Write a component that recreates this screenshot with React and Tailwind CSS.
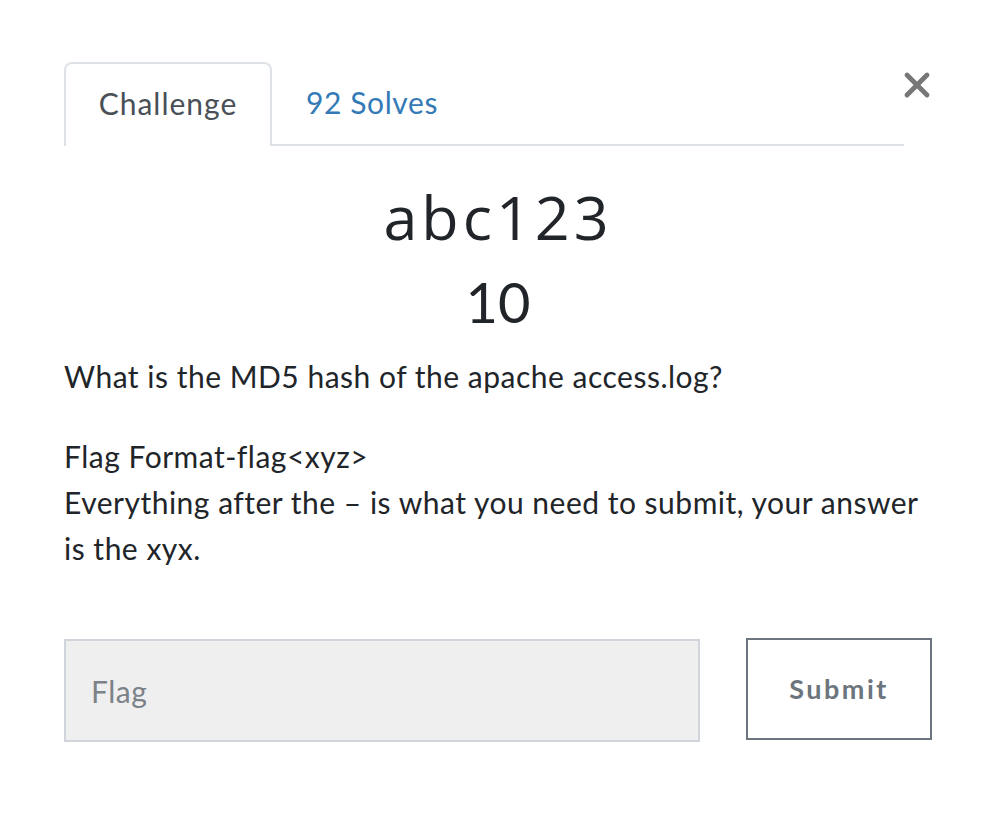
import { X } from 'lucide-react';

export default function App() {
  return (
    <div className="min-h-screen bg-white" style={{ fontFamily: 'Lato, "Noto Sans", sans-serif' }}>
      <div className="pl-[64px] pr-[51px] pt-[62px]">
        <div className="flex items-start">
          <div className="flex flex-1 border-b-2 border-[#dee2e6]">
            <div className="-mb-[2px] w-[208px] h-[84px] pb-[3px] flex items-center justify-center border-2 border-b-0 border-[#dee2e6] rounded-t-[8px] bg-white text-[30px] tracking-[1px] text-[#495057]">
              Challenge
            </div>
            <div className="h-[82px] pl-[34px] pb-[1px] flex items-center text-[30px] tracking-[0.6px] text-[#337ab7]">
              92 Solves
            </div>
          </div>
          <button className="mt-[3px] -ml-[7px] -mr-[6px] text-[#777777]">
            <X size={40} strokeWidth={2.9} />
          </button>
        </div>

        <div className="w-[868px]">
          <h1 className="mt-[36px] text-center text-[61px] leading-[70px] tracking-[4px] text-[#212529]" style={{ fontFamily: '"Open Sans", sans-serif', fontWeight: 400 }}>
            abc123
          </h1>
          <div className="mt-[15px] text-center text-[56px] leading-[70px] text-[#212529]">10</div>

          <p className="mt-[16px] text-[30px] leading-[46px] tracking-[0.5px] text-[#212529]">
            What is the MD5 hash of the apache access.log?
          </p>
          <p className="mt-[34px] text-[30px] leading-[46px] tracking-[0.5px] text-[#212529]">
            Flag Format-flag&lt;xyz&gt;
            <br />
            Everything after the – is what you need to submit, your answer is the xyx.
          </p>

          <div className="mt-[68px] flex items-start justify-between">
            <input
              placeholder="Flag"
              className="w-[636px] h-[103px] bg-[#efefef] border-2 border-[#d0d5dc] px-[25px] text-[30px] tracking-[0.5px] text-[#212529] placeholder:text-[#7b8288] outline-none"
            />
            <button className="-mt-[1px] w-[186px] h-[102px] border-2 border-[#6c757d] bg-white text-[27px] font-bold tracking-[2.5px] text-[#6c757d]">
              Submit
            </button>
          </div>
        </div>
      </div>
    </div>
  );
}
